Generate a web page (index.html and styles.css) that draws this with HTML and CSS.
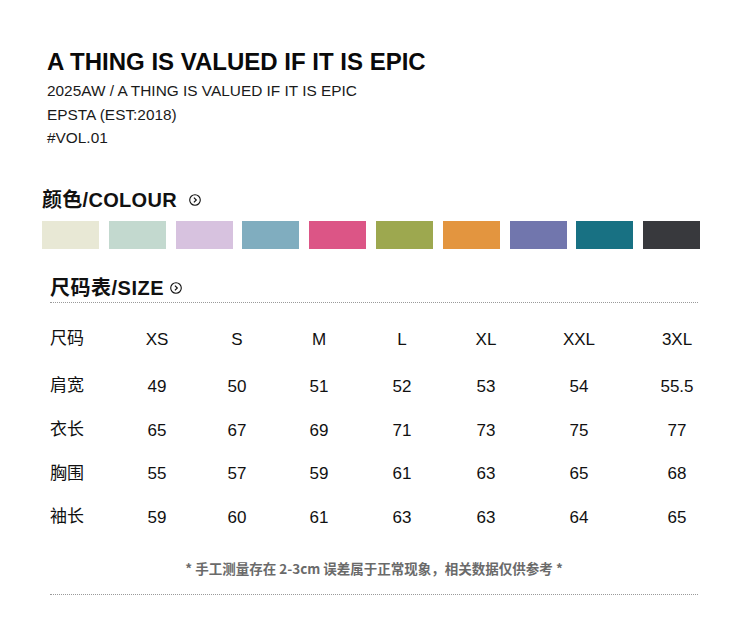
FILE: index.html
```html
<!DOCTYPE html>
<html lang="zh-CN">
<head>
<meta charset="utf-8">
<title>EPSTA Size</title>
<link rel="stylesheet" href="styles.css">
</head>
<body>
<div class="page">
  <header class="intro">
    <h1 class="title">A THING IS VALUED IF IT IS EPIC</h1>
    <p class="sub">2025AW / A THING IS VALUED IF IT IS EPIC</p>
    <p class="sub">EPSTA (EST:2018)</p>
    <p class="sub">#VOL.01</p>
  </header>

  <section class="colour">
    <h2 class="heading">颜色/COLOUR
      <svg class="go go-wide" viewBox="0 0 12 12" width="12" height="12"><circle cx="6" cy="6" r="5.3" fill="none" stroke="#111" stroke-width="1.1"/><path d="M4.9 3.6 L7.3 6 L4.9 8.4" fill="none" stroke="#111" stroke-width="1.2"/></svg>
    </h2>
    <div class="swatches">
      <span class="sw sw1"></span>
      <span class="sw sw2"></span>
      <span class="sw sw3"></span>
      <span class="sw sw4"></span>
      <span class="sw sw5"></span>
      <span class="sw sw6"></span>
      <span class="sw sw7"></span>
      <span class="sw sw8"></span>
      <span class="sw sw9"></span>
      <span class="sw sw10"></span>
    </div>
  </section>

  <section class="size">
    <h2 class="heading size-heading">尺码表/SIZE
      <svg class="go" viewBox="0 0 12 12" width="12" height="12"><circle cx="6" cy="6" r="5.3" fill="none" stroke="#111" stroke-width="1.1"/><path d="M4.9 3.6 L7.3 6 L4.9 8.4" fill="none" stroke="#111" stroke-width="1.2"/></svg>
    </h2>
    <div class="table">
      <div class="row head">
        <span class="lbl">尺码</span><span>XS</span><span>S</span><span>M</span><span>L</span><span>XL</span><span>XXL</span><span>3XL</span>
      </div>
      <div class="row">
        <span class="lbl">肩宽</span><span>49</span><span>50</span><span>51</span><span>52</span><span>53</span><span>54</span><span>55.5</span>
      </div>
      <div class="row">
        <span class="lbl">衣长</span><span>65</span><span>67</span><span>69</span><span>71</span><span>73</span><span>75</span><span>77</span>
      </div>
      <div class="row">
        <span class="lbl">胸围</span><span>55</span><span>57</span><span>59</span><span>61</span><span>63</span><span>65</span><span>68</span>
      </div>
      <div class="row">
        <span class="lbl">袖长</span><span>59</span><span>60</span><span>61</span><span>63</span><span>63</span><span>64</span><span>65</span>
      </div>
    </div>
    <p class="note">* 手工测量存在 2-3cm 误差属于正常现象，相关数据仅供参考 *</p>
    <div class="rule"></div>
  </section>
</div>
</body>
</html>
```

FILE: styles.css
```css
html, body {
  margin: 0;
  padding: 0;
  background: #fff;
}

body {
  font-family: "Liberation Sans", Arial, "Noto Sans CJK SC", sans-serif;
  color: #111;
}

.page {
  width: 750px;
  height: 636px;
  overflow: hidden;
  padding-top: 48px;
  box-sizing: border-box;
}

.intro {
  padding-left: 47px;
}

.title {
  margin: 0 0 3px 0;
  font-size: 24px;
  line-height: 28px;
  font-weight: 700;
  color: #0a0a0a;
}

.sub {
  margin: 0;
  font-size: 15.4px;
  line-height: 23.5px;
  color: #1a1a1a;
}

.colour {
  margin-top: 38px;
  padding-left: 42px;
}

.heading {
  margin: 0;
  font-size: 20px;
  line-height: 24px;
  font-weight: 700;
  color: #111;
  display: flex;
  align-items: center;
  letter-spacing: 0.3px;
}

.go {
  margin-left: 12px;
  margin-top: 1px;
}

.go-wide {
  margin-left: 12px;
}

.swatches {
  margin-top: 9px;
  display: flex;
  gap: 9.8px;
}

.sw {
  display: block;
  width: 57px;
  height: 28px;
}

.sw1 { background: #e8e8d5; }
.sw2 { background: #c3d9cf; }
.sw3 { background: #d7c2df; }
.sw4 { background: #80adbf; }
.sw5 { background: #dc5586; }
.sw6 { background: #9da84f; }
.sw7 { background: #e3953f; }
.sw8 { background: #7176ad; }
.sw9 { background: #187183; }
.sw10 { background: #38393d; }

.size {
  margin-top: 27px;
  margin-left: 50px;
  width: 648px;
}

.size-heading {
  font-size: 20px;
  letter-spacing: 0.5px;
  padding-bottom: 2px;
  border-bottom: 1px dotted #9a9a9a;
}

.size-heading .go {
  margin-left: 6px;
}

.table {
  margin-top: 11px;
}

.row {
  display: grid;
  grid-template-columns: 67px 80px 80px 84px 82px 86px 100px 96px;
  height: 43.7px;
  align-items: center;
  font-size: 17px;
  line-height: 1;
  color: #111;
}

.row.head {
  height: 51px;
}

.row span {
  text-align: center;
}

.row .lbl {
  text-align: left;
  font-family: "Noto Sans CJK SC", sans-serif;
  font-size: 17px;
  line-height: 1;
  margin-bottom: 5px;
}

.note {
  margin: 19px 0 0 0;
  text-align: center;
  font-family: "Noto Sans CJK SC", sans-serif;
  font-size: 13.5px;
  line-height: 20px;
  font-weight: 700;
  color: #6a6a6a;
}

.rule {
  margin-top: 16px;
  border-top: 1px dotted #9a9a9a;
}
```
